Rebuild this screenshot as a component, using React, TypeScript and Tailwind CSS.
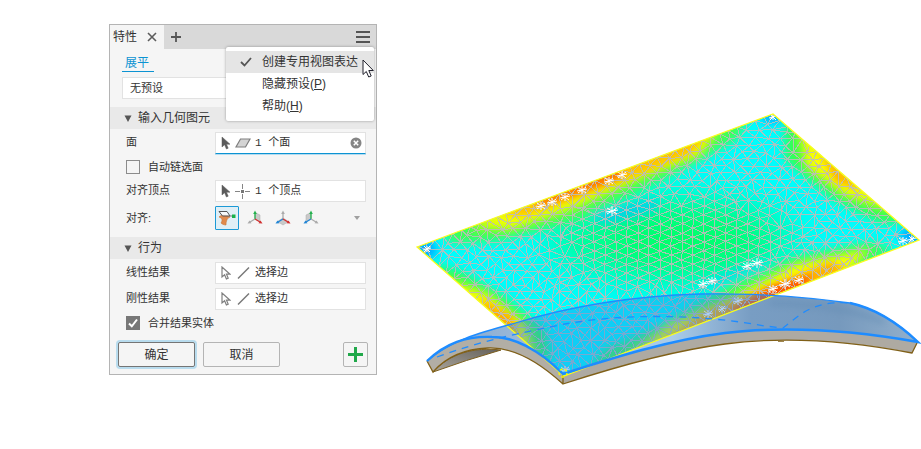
import { useState, type ReactNode } from 'react'

type Pt = [number, number]
type Tri = [number, number, number]

const QUAD: Pt[] = [[417, 247], [773, 114], [919, 240], [564, 376]]
const QUAD_POINTS = QUAD.map((p) => p.join(',')).join(' ')

const BACK_EDGE = 'M427 361C450 341 478 333 512 324C570 306 630 296 700 294C755 293 808 297 850 303C878 309 900 325 918 342'
const SURFACE = `${BACK_EDGE}C850 330 785 326 725 333C670 340 615 357 563 374C540 351 515 337 492 337C466 336 446 343 427 361Z`

// distance inside the sheet, negative when the point is outside
function insideDistance([x, y]: Pt) {
  let d = Infinity
  for (let i = 0; i < 4; i++) {
    const a = QUAD[i]
    const b = QUAD[(i + 1) % 4]
    const len = Math.hypot(b[0] - a[0], b[1] - a[1])
    d = Math.min(d, ((b[0] - a[0]) * (y - a[1]) - (b[1] - a[1]) * (x - a[0])) / len)
  }
  return d
}

function meshPoints() {
  let seed = 7
  const rnd = () => {
    seed = (seed * 16807) % 2147483647
    return seed / 2147483647 - 0.5
  }
  const inCore = (x: number, y: number) =>
    ((x - 675) / 125) ** 2 + ((y - 243) / 52) ** 2 < 1 + 0.45 * Math.sin(x * 0.09 + y * 0.05) * Math.cos(y * 0.11)
  const pts: Pt[] = []
  for (let row = 0, y = 117; y < 376; y += 7, row++) {
    for (let x = 410 + (row % 2) * 6; x < 921; x += 13) {
      const p: Pt = [x + rnd() * 4, y + rnd() * 2.4]
      if (!inCore(x, y) && insideDistance(p) > 4) pts.push(p)
    }
  }
  for (let col = 0, x = 528; x < 826; x += 11, col++) {
    for (let y = 170 + (col % 2) * 4; y < 316; y += 9) {
      if (inCore(x, y)) pts.push([x + rnd() * 1.5, y + rnd() * 1.2])
    }
  }
  QUAD.forEach((a, i) => {
    const b = QUAD[(i + 1) % 4]
    const n = i % 2 ? 20 : 40
    for (let k = 0; k < n; k++) {
      const t = k / n
      pts.push([a[0] + (b[0] - a[0]) * t + rnd() * 0.2, a[1] + (b[1] - a[1]) * t + rnd() * 0.2])
    }
  })
  return pts
}

// Bowyer-Watson
function triangulate(source: Pt[]) {
  const n = source.length
  const pts: Pt[] = [...source, [-3000, -2000], [4000, -2000], [650, 5000]]
  const make = (t: Tri) => {
    const [[ax, ay], [bx, by], [cx, cy]] = t.map((i) => pts[i])
    const d = 2 * (ax * (by - cy) + bx * (cy - ay) + cx * (ay - by))
    const a2 = ax * ax + ay * ay
    const b2 = bx * bx + by * by
    const c2 = cx * cx + cy * cy
    const x = (a2 * (by - cy) + b2 * (cy - ay) + c2 * (ay - by)) / d
    const y = (a2 * (cx - bx) + b2 * (ax - cx) + c2 * (bx - ax)) / d
    return { t, x, y, r: (ax - x) ** 2 + (ay - y) ** 2 }
  }
  let tris = [make([n, n + 1, n + 2])]
  for (let i = 0; i < n; i++) {
    const [px, py] = pts[i]
    const edges = new Map<string, Pt>()
    const keep: typeof tris = []
    for (const tri of tris) {
      if ((px - tri.x) ** 2 + (py - tri.y) ** 2 >= tri.r) {
        keep.push(tri)
        continue
      }
      for (let k = 0; k < 3; k++) {
        const a = tri.t[k]
        const b = tri.t[(k + 1) % 3]
        const key = `${Math.min(a, b)}-${Math.max(a, b)}`
        if (edges.has(key)) edges.delete(key)
        else edges.set(key, [a, b])
      }
    }
    edges.forEach(([a, b]) => keep.push(make([a, b, i])))
    tris = keep
  }
  return tris.map((tri) => tri.t).filter((t) => t.every((i) => i < n))
}

function buildMeshPath() {
  const pts = meshPoints()
  const seen = new Set<string>()
  let d = ''
  for (const t of triangulate(pts)) {
    for (let k = 0; k < 3; k++) {
      const a = Math.min(t[k], t[(k + 1) % 3])
      const b = Math.max(t[k], t[(k + 1) % 3])
      if (seen.has(`${a}-${b}`)) continue
      seen.add(`${a}-${b}`)
      d += `M${pts[a][0].toFixed(1)} ${pts[a][1].toFixed(1)}L${pts[b][0].toFixed(1)} ${pts[b][1].toFixed(1)}`
    }
  }
  return d
}

const MESH_PATH = buildMeshPath()

const SPARKS: [number, number, number][] = [
  [612, 211, 6], [703, 284, 5], [712, 281, 5], [747, 266, 5], [757, 263, 6],
  [541, 206, 5], [552, 202, 5], [565, 197, 5], [582, 190, 5], [609, 181, 5], [622, 175, 5],
  [708, 314, 5], [722, 309, 4], [738, 301, 5], [773, 289, 5], [785, 284, 6], [799, 280, 5],
  [427, 249, 4], [773, 117, 4], [903, 241, 5], [912, 239, 4], [565, 370, 5],
]

function FlattenView() {
  return (
    <svg viewBox="415 100 506 290" className="block h-auto w-full" role="img" aria-label="展平">
      <defs>
        <clipPath id="sheet"><polygon points={QUAD_POINTS} /></clipPath>
        <filter id="soft" x="-30%" y="-30%" width="160%" height="160%"><feGaussianBlur stdDeviation="5" /></filter>
        <filter id="wide" x="-40%" y="-100%" width="180%" height="300%"><feGaussianBlur stdDeviation="18" /></filter>
        <filter id="tight" x="-30%" y="-30%" width="160%" height="160%"><feGaussianBlur stdDeviation="3" /></filter>
        <linearGradient id="steel" x1="0" y1="0" x2="1" y2="0">
          <stop offset="0" stopColor="#7fa3cc" />
          <stop offset="0.25" stopColor="#a3bfdc" />
          <stop offset="0.5" stopColor="#a9cbe9" />
          <stop offset="0.66" stopColor="#789dc3" />
          <stop offset="0.84" stopColor="#7699bd" />
          <stop offset="1" stopColor="#92b0cc" />
        </linearGradient>
        <linearGradient id="under" x1="0" y1="1" x2="1" y2="0">
          <stop offset="0" stopColor="#aaa69d" />
          <stop offset="1" stopColor="#65615b" />
        </linearGradient>
      </defs>

      {/* curved body */}
      <path d="M433 372C450 353 474 347 501 350Q466 360 433 372Z" fill="url(#under)" stroke="#7b5d1c" />
      <path d="M427 361C446 343 466 336 492 337C515 337 540 351 563 374V384C538 361 512 347 488 348C463 349 446 357 433 372Z" fill="#b2aea5" />
      <path d="M563 374C615 357 670 340 725 333C785 326 850 330 918 342L912 353C850 341 785 336 725 344C670 351 615 367 563 384Z" fill="#aeaaa2" />
      <path d="M427 361L433 372C446 357 463 349 488 348C512 347 538 361 563 384C615 367 670 351 725 344C785 336 850 341 912 353L917 343M563 374V384M778 341H784" fill="none" stroke="#806018" strokeWidth="1.3" />
      <path d={SURFACE} fill="url(#steel)" />
      <path d="M770 303C815 304 850 309 884 322" fill="none" stroke="#5f89b1" strokeWidth="5" opacity="0.45" filter="url(#tight)" />

      {/* strain map */}
      <g clipPath="url(#sheet)">
        <polygon points={QUAD_POINTS} fill="#00fdfd" />
        <ellipse cx="672" cy="240" rx="125" ry="38" fill="#00ff6a" opacity="0.75" filter="url(#wide)" />
        <ellipse cx="682" cy="240" rx="75" ry="24" fill="#00ff66" filter="url(#wide)" />
        <g filter="url(#soft)">
          <path d="M585 213L660 198L655 211L605 224Z" fill="#00c4ff" opacity="0.75" />
          <path d="M690 287L760 260L775 266L715 288Z" fill="#00d0ff" opacity="0.6" />
          <path d="M765 108H783L783 122L762 122ZM412 242L432 240L438 254L425 260ZM903 228H921V246L900 243Z" fill="#00a4ff" />
          <path d="M440 234L500 205L750 110L738 139L665 179L580 220L500 241L455 244Z" fill="#3dff55" />
          <path d="M785 112L910 222L882 224L832 199L785 160Z" fill="#36ff50" />
          <path d="M425 263L460 271L505 297L545 330L552 362L500 345Z" fill="#36ff50" />
          <path d="M585 374L606 349L665 325L735 281L800 256L870 242L896 250L760 312Z" fill="#3dff50" />
        </g>
        <g filter="url(#soft)">
          <path d="M470 227L500 208L724 124L700 155L645 176L570 210L510 230Z" fill="#f2ff00" />
          <path d="M798 128L895 212L846 196L806 167Z" fill="#fbff00" />
          <path d="M440 277L487 293L527 326L536 360L485 327Z" fill="#fbff00" />
          <path d="M620 362L670 323L725 302L795 264L870 249L840 280L740 318Z" fill="#ffff00" />
        </g>
        <g filter="url(#tight)">
          <path d="M500 214L708 133L692 153L630 179L560 204L525 216Z" fill="#ffc400" />
          <path d="M818 150L863 191L836 182Z" fill="#ffb400" />
          <path d="M480 298L513 316L520 342L490 320Z" fill="#ffb000" />
          <path d="M660 344L705 311L750 294L830 262L847 269L760 308Z" fill="#ffb000" />
          <path d="M535 202L625 166L620 178L575 195L540 207Z" fill="#ff6a00" />
          <path d="M725 312L770 286L812 274L806 286L745 312Z" fill="#ff5400" />
        </g>
        <path d={MESH_PATH} fill="none" stroke="#bdbbb9" strokeWidth="1" opacity="0.9" shapeRendering="crispEdges" />
        {SPARKS.map(([x, y, r]) => (
          <path
            key={`${x}-${y}`}
            d={`M${x - r} ${y + 1}L${x + r} ${y - 1}M${x} ${y - r + 1}v${2 * r - 2}M${x - r + 1} ${y - 3}L${x + r - 1} ${y + 3}M${x + r - 1} ${y - 3}L${x - r + 1} ${y + 3}`}
            stroke="#ffffff"
            strokeWidth="1"
          />
        ))}
        <path d={SURFACE} fill="#2a80ea" opacity="0.38" />
      </g>
      <polygon points={QUAD_POINTS} fill="none" stroke="#fbff19" strokeWidth="1.3" />

      {/* selected edges */}
      <g fill="none" stroke="#1e8cff">
        <path d={BACK_EDGE} strokeWidth="1.3" />
        <path d="M427 361C446 343 466 336 492 337C515 337 540 351 563 374C615 357 670 340 725 333C785 326 850 330 918 342C900 325 878 309 850 303" strokeWidth="2.4" />
        <path d="M437 357C480 341 520 333 560 325C620 313 700 314 765 326L783 328C797 318 810 300 850 303" strokeWidth="1.3" strokeDasharray="7 6" />
      </g>
      <circle cx="563" cy="373" r="4" fill="none" stroke="#fff700" strokeWidth="1.4" strokeDasharray="3 2" />
    </svg>
  )
}

function Pointer({ outline = false }: { outline?: boolean }) {
  return (
    <svg viewBox="0 0 10 14" className="h-[14px] w-[10px] shrink-0">
      <path
        d="M1 1V11L3.6 8.7L5.4 13L7.2 12.2L5.5 8.2H9Z"
        fill={outline ? '#ffffff' : '#5b5b5b'}
        stroke={outline ? '#808080' : '#5b5b5b'}
        strokeWidth={outline ? 1.2 : 0.5}
      />
    </svg>
  )
}

const FaceIcon = () => (
  <svg viewBox="0 0 16 14" className="h-[14px] w-4 shrink-0">
    <path d="M5.5 3H15L10.5 11H1Z" fill="#d4d4d4" stroke="#7e7e7e" strokeWidth="1.2" />
  </svg>
)

const VertexIcon = () => (
  <svg viewBox="0 0 15 15" className="size-[15px] shrink-0">
    <path d="M7.500 0V5M7.500 10V15M0 7.500H5M10 7.500H15" stroke="#858585" />
    <rect x="6" y="6" width="3" height="3" fill="#777777" />
  </svg>
)

const EdgeIcon = () => (
  <svg viewBox="0 0 16 14" className="h-[14px] w-4 shrink-0">
    <path d="M3 12.500L14 1.500" stroke="#777777" strokeWidth="1.5" />
  </svg>
)

type AxisProps = { up: string; left: string; right: string; face: string }

function AxisIcon({ up, left, right, face }: AxisProps) {
  return (
    <svg viewBox="0 0 16 16" className="size-4">
      <path d={face} fill="#c9c9c9" stroke="#a8a8a8" strokeWidth="0.5" />
      <path d="M8 9V3" stroke={up} strokeWidth="1.3" />
      <path d="M8 0.500L6.200 4H9.800Z" fill={up} />
      <path d="M8 9L3 12" stroke={left} strokeWidth="1.3" />
      <path d="M0.500 13.500L2.500 10.500L4.500 13.200Z" fill={left} />
      <path d="M8 9L13 12" stroke={right} strokeWidth="1.3" />
      <path d="M15.500 13.500L13.500 10.500L11.500 13.200Z" fill={right} />
    </svg>
  )
}

const AXES: (AxisProps & { label: string })[] = [
  { label: 'X-Z', up: '#22b14c', left: '#aaaaaa', right: '#d22f2f', face: 'M8 9V2.500L13 5V12Z' },
  { label: 'X-Y', up: '#aaaaaa', left: '#2185d5', right: '#d22f2f', face: 'M8 8L13.500 11.500L8 15L2.500 11.500Z' },
  { label: 'Y-Z', up: '#22b14c', left: '#2185d5', right: '#aaaaaa', face: 'M8 9V2.500L3 5V12Z' },
]

function Section({ title, children }: { title: string; children: ReactNode }) {
  return (
    <section>
      <h2 className="flex h-[22px] items-center gap-[6px] bg-[#e9e9e9] pl-[14px] text-[12px]">
        <svg viewBox="0 0 8 7" className="h-[7px] w-2"><path d="M0.500 0.500H7.500L4 7Z" fill="#555555" /></svg>
        {title}
      </h2>
      {children}
    </section>
  )
}

type FieldProps = { id: string; label: string; value: string; icon: ReactNode; outline?: boolean; active?: boolean }

function Field({ id, label, value, icon, outline, active }: FieldProps) {
  return (
    <div className="flex items-center pr-[10px] pl-4">
      <label htmlFor={id} className="w-[89px] shrink-0 pb-[2px]">{label}</label>
      <div className={`flex h-[22px] min-w-0 flex-1 items-center border bg-white pl-[5px] ${active ? 'border-[#e2e2e2] border-b-[#0c93d2] shadow-[0_1px_0_#b5dcf0]' : 'border-[#e2e2e2]'}`}>
        <Pointer outline={outline} />
        <span className="mr-1 ml-1 flex w-4 shrink-0">{icon}</span>
        <input id={id} defaultValue={value} className="w-full min-w-0 bg-transparent font-['Liberation_Mono','Noto_Sans_CJK_SC',monospace] outline-none" />
        {active && (
          <button type="button" aria-label="清除" className="mr-[3px] shrink-0">
            <svg viewBox="0 0 12 12" className="size-3">
              <circle cx="6" cy="6" r="5.500" fill="#858585" />
              <path d="M3.800 3.800L8.200 8.200M8.200 3.800L3.800 8.200" stroke="#ffffff" strokeWidth="1.500" />
            </svg>
          </button>
        )}
      </div>
    </div>
  )
}

function CheckRow({ id, label, checked }: { id: string; label: string; checked?: boolean }) {
  return (
    <div className="flex h-[26px] items-center gap-2 pl-4">
      <span className="relative flex">
        <input id={id} type="checkbox" defaultChecked={checked} className="peer size-[14px] appearance-none border border-[#8c8c8c] bg-[#f5f5f5] checked:border-[#777777] checked:bg-[#777777]" />
        <svg viewBox="0 0 14 14" className="pointer-events-none absolute inset-0 hidden size-[14px] peer-checked:block">
          <path d="M3 7.500L5.800 10.300L11 3.500" fill="none" stroke="#ffffff" strokeWidth="2" />
        </svg>
      </span>
      <label htmlFor={id}>{label}</label>
    </div>
  )
}

function OptionsMenu() {
  return (
    <div role="menu" className="absolute top-[22px] right-[2px] w-[148px] rounded-[2px] bg-white py-1 text-[12px] shadow-[0_0_3px_rgba(0,0,0,0.35)]">
      <button type="button" role="menuitemcheckbox" aria-checked="true" className="relative flex h-[22px] w-full items-center bg-[#e5e5e5] pl-9">
        <svg viewBox="0 0 12 10" className="absolute left-[14px] h-[10px] w-3">
          <path d="M1 5L4.500 8.500L11 1" fill="none" stroke="#555555" strokeWidth="1.800" />
        </svg>
        创建专用视图表达
      </button>
      <button type="button" role="menuitem" className="flex h-[22px] w-full items-center pl-9">
        隐藏预设(<u>P</u>)
      </button>
      <button type="button" role="menuitem" className="flex h-[22px] w-full items-center pl-9">
        帮助(<u>H</u>)
      </button>
      <svg viewBox="0 0 12 19" className="pointer-events-none absolute top-3 right-0 h-[19px] w-3">
        <path d="M1 1V15.500L4.300 12.500L6.700 18L9.200 17L6.800 11.500H11.300Z" fill="#ffffff" stroke="#20202c" />
      </svg>
    </div>
  )
}

export default function App() {
  const [align, setAlign] = useState('surface')

  return (
    <main className="flex min-h-screen items-start bg-white pt-6 pl-[109px] font-['Liberation_Sans','Noto_Sans_CJK_SC',sans-serif] text-[11px] leading-[16px] text-[#333333]">
      <form className="relative w-[268px] shrink-0 border border-[#b4b4b4] bg-[#f5f5f5]" onSubmit={(e) => e.preventDefault()}>
        <header className="flex h-6 items-stretch bg-[#d9d9d9] text-[12px]">
          <div className="flex w-[54px] items-center justify-between bg-[#f5f5f5] pr-[7px] pl-[3px]">
            特性
            <button type="button" aria-label="关闭">
              <svg viewBox="0 0 10 10" className="size-[10px]"><path d="M1 1L9 9M9 1L1 9" stroke="#5c5c5c" strokeWidth="1.600" /></svg>
            </button>
          </div>
          <button type="button" aria-label="新建" className="pl-[7px]">
            <svg viewBox="0 0 10 10" className="size-[10px]"><path d="M5 0V10M0 5H10" stroke="#555555" strokeWidth="1.800" /></svg>
          </button>
          <button type="button" aria-label="菜单" className="mr-[6px] ml-auto">
            <svg viewBox="0 0 14 12" className="h-3 w-[14px]"><path d="M0 1H14M0 6H14M0 11H14" stroke="#555555" strokeWidth="2" /></svg>
          </button>
        </header>

        <div className="px-3 pt-[6px] pb-2">
          <a href="#flatten" className="block h-[17px] w-8 border-b border-[#0c93d2] pl-[3px] text-[12px] text-[#0c93d2]">展平</a>
          <select aria-label="预设" className="mt-[5px] block h-[22px] w-full appearance-none border border-[#e2e2e2] bg-white pl-[7px]">
            <option>无预设</option>
          </select>
        </div>

        <Section title="输入几何图元">
          <div className="pt-[3px] pb-[7px]">
            <Field id="face" label="面" value="1 个面" icon={<FaceIcon />} active />
            <CheckRow id="chain" label="自动链选面" />
            <Field id="vertex" label="对齐顶点" value="1 个顶点" icon={<VertexIcon />} />
            <div className="flex items-center pt-1 pr-[10px] pl-4">
              <span id="align-label" className="w-[89px] shrink-0">对齐:</span>
              <div role="group" aria-labelledby="align-label" className="flex flex-1 items-center gap-1">
                <button
                  type="button"
                  aria-label="曲面"
                  onClick={() => setAlign('surface')}
                  className={`flex size-6 items-center justify-center rounded-[1px] border ${align === 'surface' ? 'border-[#1c9ad6] bg-[#e0eff6]' : 'border-transparent'}`}
                >
                  <svg viewBox="0 0 18 16" className="h-4 w-[18px] shrink-0">
                    <path d="M1 7C4 4 9 5 12 7C9 8 8 11 8 15C6 15 4 14 3 13C5 10 4 8 1 7Z" fill="#e08a4c" stroke="#c87538" strokeWidth="0.600" />
                    <path d="M1 1.500H9L12 6H4.500Z" fill="#ffffff" fillOpacity="0.700" stroke="#555555" />
                    <path d="M12 6H15" stroke="#777777" />
                    <rect x="14" y="4.500" width="3.500" height="3.500" fill="#16b14b" />
                  </svg>
                </button>
                {AXES.map(({ label, ...axis }) => (
                  <button
                    key={label}
                    type="button"
                    aria-label={label}
                    onClick={() => setAlign(label)}
                    className={`flex size-6 items-center justify-center rounded-[1px] border ${align === label ? 'border-[#1c9ad6] bg-[#e0eff6]' : 'border-transparent'}`}
                  >
                    <AxisIcon {...axis} />
                  </button>
                ))}
                <button type="button" aria-label="更多" className="mr-[6px] ml-auto">
                  <svg viewBox="0 0 6 4" className="h-1 w-[6px]"><path d="M0 0H6L3 4Z" fill="#a0a0a0" /></svg>
                </button>
              </div>
            </div>
          </div>
        </Section>

        <Section title="行为">
          <div className="flex flex-col gap-1 pt-[3px]">
            <Field id="linear" label="线性结果" value="选择边" icon={<EdgeIcon />} outline />
            <Field id="rigid" label="刚性结果" value="选择边" icon={<EdgeIcon />} outline />
          </div>
          <CheckRow id="merge" label="合并结果实体" checked />
        </Section>

        <footer className="flex gap-2 px-2 pt-[6px] pb-[7px] text-[12px]">
          <button type="submit" className="h-[25px] w-[77px] rounded-[2px] border border-[#757575] bg-[#f5f5f5] shadow-[0_0_0_2px_#b9dcee]">确定</button>
          <button type="button" className="h-[25px] w-[77px] rounded-[2px] border border-[#b4b4b4]">取消</button>
          <button type="button" aria-label="应用" className="ml-auto flex h-[25px] w-[25px] items-center justify-center rounded-[2px] border border-[#b4b4b4]">
            <svg viewBox="0 0 15 15" className="size-[15px]"><path d="M7.500 0V15M0 7.500H15" stroke="#20a84a" strokeWidth="3" /></svg>
          </button>
        </footer>

        <OptionsMenu />
      </form>

      <div className="min-w-0 flex-1 pt-[76px] pl-[38px]">
        <FlattenView />
      </div>
    </main>
  )
}
